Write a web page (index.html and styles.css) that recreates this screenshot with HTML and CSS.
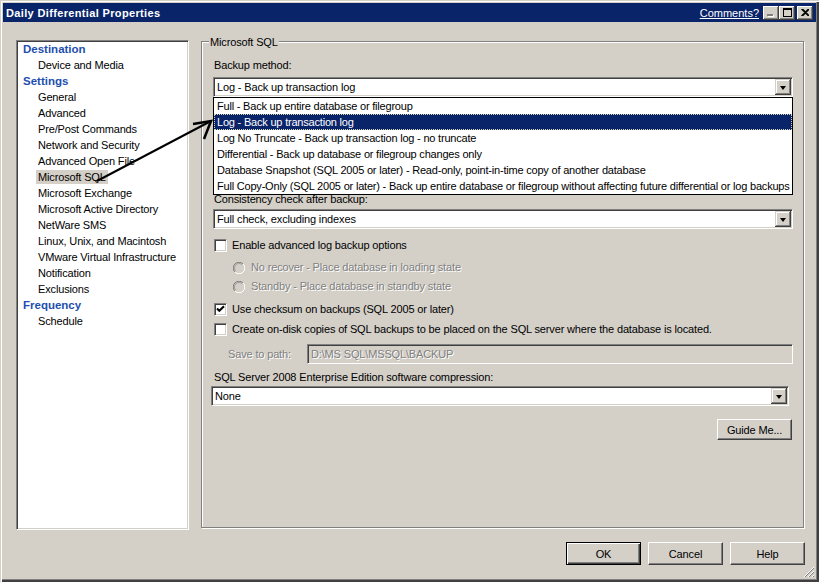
FILE: index.html
```html
<!DOCTYPE html>
<html>
<head>
<meta charset="utf-8">
<title>Daily Differential Properties</title>
<link rel="stylesheet" href="styles.css">
</head>
<body>
<div class="window">
  <div class="titlebar">
    <span class="title">Daily Differential Properties</span>
    <span class="comments">Comments?</span>
    <span class="capbtn disabled"><svg width="8" height="8" viewBox="0 0 8 8"><rect x="1" y="6" width="6" height="2" fill="#fff"/><rect x="0" y="5" width="6" height="2" fill="#808080"/></svg></span>
    <span class="capbtn"><svg width="9" height="9" viewBox="0 0 9 9"><rect x="0.5" y="1" width="8" height="7.5" fill="none" stroke="#000" stroke-width="1"/><rect x="0" y="0" width="9" height="2" fill="#000"/></svg></span>
    <span class="capbtn close"><svg width="8" height="7" viewBox="0 0 8 7"><path d="M0.5 0 L7.5 7 M1.5 0 L8.5 7 M7.5 0 L0.5 7 M8.5 0 L1.5 7" stroke="#000" stroke-width="1.2" fill="none"/></svg></span>
  </div>

  <div class="main">
    <div class="nav">
      <div class="nav-head">Destination</div>
      <div class="nav-item"><span>Device and Media</span></div>
      <div class="nav-head">Settings</div>
      <div class="nav-item"><span>General</span></div>
      <div class="nav-item"><span>Advanced</span></div>
      <div class="nav-item"><span>Pre/Post Commands</span></div>
      <div class="nav-item"><span>Network and Security</span></div>
      <div class="nav-item"><span>Advanced Open File</span></div>
      <div class="nav-item selected"><span>Microsoft SQL</span></div>
      <div class="nav-item"><span>Microsoft Exchange</span></div>
      <div class="nav-item"><span>Microsoft Active Directory</span></div>
      <div class="nav-item"><span>NetWare SMS</span></div>
      <div class="nav-item"><span>Linux, Unix, and Macintosh</span></div>
      <div class="nav-item"><span>VMware Virtual Infrastructure</span></div>
      <div class="nav-item"><span>Notification</span></div>
      <div class="nav-item"><span>Exclusions</span></div>
      <div class="nav-head">Frequency</div>
      <div class="nav-item"><span>Schedule</span></div>
    </div>

    <div class="group">
      <div class="legend">Microsoft SQL</div>

      <div class="label l-backup">Backup method:</div>
      <div class="combo c-backup">
        <span class="combo-text">Log - Back up transaction log</span>
        <span class="dd-btn"><i class="tri"></i></span>
        <div class="listbox">
          <div class="opt">Full - Back up entire database or filegroup</div>
          <div class="opt sel">Log - Back up transaction log</div>
          <div class="opt">Log No Truncate - Back up transaction log - no truncate</div>
          <div class="opt">Differential - Back up database or filegroup changes only</div>
          <div class="opt">Database Snapshot (SQL 2005 or later) - Read-only, point-in-time copy of another database</div>
          <div class="opt">Full Copy-Only (SQL 2005 or later) - Back up entire database or filegroup without affecting future differential or log backups</div>
        </div>
      </div>

      <div class="label l-consist">Consistency check after backup:</div>
      <div class="combo c-consist">
        <span class="combo-text">Full check, excluding indexes</span>
        <span class="dd-btn"><i class="tri"></i></span>
      </div>

      <div class="check r-adv"><span class="box"></span><span>Enable advanced log backup options</span></div>
      <div class="radio r-norec"><svg class="rad" width="12" height="12" viewBox="0 0 12 12"><circle cx="6" cy="6" r="5.5" fill="#d4d0c8"/><path d="M1.9 10.1 A5.5 5.5 0 0 1 10.1 1.9" stroke="#808080" fill="none"/><path d="M10.1 1.9 A5.5 5.5 0 0 1 1.9 10.1" stroke="#fff" fill="none"/><path d="M2.8 9.2 A4.5 4.5 0 0 1 9.2 2.8" stroke="#404040" fill="none" opacity="0.35"/></svg><span class="dis">No recover - Place database in loading state</span></div>
      <div class="radio r-stand"><svg class="rad" width="12" height="12" viewBox="0 0 12 12"><circle cx="6" cy="6" r="5.5" fill="#d4d0c8"/><path d="M1.9 10.1 A5.5 5.5 0 0 1 10.1 1.9" stroke="#808080" fill="none"/><path d="M10.1 1.9 A5.5 5.5 0 0 1 1.9 10.1" stroke="#fff" fill="none"/><path d="M2.8 9.2 A4.5 4.5 0 0 1 9.2 2.8" stroke="#404040" fill="none" opacity="0.35"/></svg><span class="dis">Standby - Place database in standby state</span></div>
      <div class="check r-sum"><span class="box"><svg width="9" height="9" viewBox="0 0 9 9"><path d="M1 3.5 L3.3 5.8 L8 1.2" stroke="#000" stroke-width="2" fill="none"/></svg></span><span>Use checksum on backups (SQL 2005 or later)</span></div>
      <div class="check r-disk"><span class="box"></span><span>Create on-disk copies of SQL backups to be placed on the SQL server where the database is located.</span></div>

      <div class="saverow">
        <span class="savelabel dis">Save to path:</span>
        <span class="field dis">D:\MS SQL\MSSQL\BACKUP</span>
      </div>

      <div class="label l-comp">SQL Server 2008 Enterprise Edition software compression:</div>
      <div class="combo c-comp">
        <span class="combo-text">None</span>
        <span class="dd-btn"><i class="tri"></i></span>
      </div>

      <div class="guide-row"><span class="btn guide">Guide Me...</span></div>
    </div>
  </div>

  <div class="footer">
    <span class="btn default">OK</span>
    <span class="btn">Cancel</span>
    <span class="btn">Help</span>
  </div>

  <svg class="grip" width="12" height="12" viewBox="0 0 12 12">
    <path d="M11 1 L1 11 M11 5 L5 11 M11 9 L9 11" stroke="#fff" stroke-width="1"/>
    <path d="M11 2 L2 11 M11 6 L6 11 M11 10 L10 11" stroke="#808080" stroke-width="1"/>
  </svg>

  <svg class="arrow" width="819" height="582" viewBox="0 0 819 582">
    <path d="M97 181 L211 121" stroke="#000" stroke-width="2" fill="none"/>
    <path d="M193 124 L211 121 L204 139" stroke="#000" stroke-width="2.5" fill="none" stroke-linejoin="miter"/>
  </svg>
</div>
</body>
</html>
```

FILE: styles.css
```css
* { box-sizing: border-box; }
html, body { margin: 0; padding: 0; }
body {
  width: 819px;
  height: 582px;
  overflow: hidden;
  background: #d4d0c8;
  font-family: "Liberation Sans", Arial, sans-serif;
  font-size: 11px;
  letter-spacing: -0.15px;
  color: #000;
}

.window {
  position: relative;
  width: 819px;
  height: 582px;
  padding: 3px;
  background: #d4d0c8;
  box-shadow: inset 1px 1px 0 #d4d0c8, inset 2px 2px 0 #fff, inset -1px -1px 0 #404040, inset -2px -2px 0 #404040, inset -3px -3px 0 #808080;
}

/* Title bar */
.titlebar {
  display: flex;
  align-items: center;
  height: 19px;
  padding: 0 3px 0 3px;
  background: #0a246a;
  color: #fff;
}
.title { flex: 1; font-weight: bold; font-size: 11px; letter-spacing: 0.35px; }
.comments { text-decoration: underline; margin-right: 4px; letter-spacing: 0; }
.capbtn {
  display: flex;
  align-items: center;
  justify-content: center;
  width: 16px;
  height: 14px;
  background: #d4d0c8;
  box-shadow: inset -1px -1px 0 #404040, inset 1px 1px 0 #fff, inset -2px -2px 0 #808080;
}
.capbtn.close { margin-left: 2px; }

/* Main area */
.main {
  display: flex;
  align-items: flex-start;
  padding: 18px 0 0 13px;
}
.nav {
  width: 173px;
  height: 490px;
  background: #fff;
  border: 1px solid;
  border-color: #808080 #fff #fff #808080;
  box-shadow: inset 1px 1px 0 #404040, inset -1px -1px 0 #d4d0c8;
  padding: 0 0 0 6px;
}
.nav-head {
  height: 16px;
  line-height: 16px;
  font-weight: bold;
  font-size: 11.5px;
  letter-spacing: 0;
  color: #1d4fb0;
}
.nav-item {
  height: 16px;
  line-height: 16px;
  padding-left: 13px;
}
.nav-item span { padding: 1px 2px; }
.nav-item.selected span { background: #d4d0c8; }

.group {
  margin: 1px 0 0 12px;
  width: 603px;
  height: 487px;
  border: 1px solid #808080;
  box-shadow: inset 1px 1px 0 #fff, 1px 1px 0 #fff;
  padding: 0 10px 0 11px;
  display: flex;
  flex-direction: column;
}
.legend {
  align-self: flex-start;
  margin: -6px 0 0 -4px;
  padding: 0 1px;
  height: 13px;
  line-height: 13px;
  background: #d4d0c8;
}
.label { height: 13px; line-height: 13px; padding-left: 1px; }
.l-backup { margin-top: 10px; }
.l-consist { margin-top: 96px; }
.l-comp { margin-top: 7px; }

.combo {
  position: relative;
  display: flex;
  align-items: center;
  height: 20px;
  background: #fff;
  border: 1px solid;
  border-color: #808080 #fff #fff #808080;
  box-shadow: inset 1px 1px 0 #404040, inset -1px -1px 0 #d4d0c8;
  padding: 0 1px 0 3px;
}
.c-backup { margin-top: 5px; }
.c-consist { margin-top: 3px; }
.c-comp { margin-top: 2px; margin-left: -2px; width: 578px; }
.combo-text { flex: 1; white-space: nowrap; }
.dd-btn {
  display: flex;
  align-items: center;
  justify-content: center;
  width: 16px;
  height: 16px;
  background: #d4d0c8;
  box-shadow: inset -1px -1px 0 #404040, inset 1px 1px 0 #d4d0c8, inset -2px -2px 0 #808080, inset 2px 2px 0 #fff;
}
.tri {
  width: 0;
  height: 0;
  border-left: 3.5px solid transparent;
  border-right: 3.5px solid transparent;
  border-top: 4px solid #000;
  margin-top: 1px;
}
.listbox {
  position: absolute;
  z-index: 5;
  left: -1px;
  right: -1px;
  top: 19px;
  background: #fff;
  border: 1px solid #000;
}
.opt {
  height: 16px;
  line-height: 16px;
  padding-left: 3px;
  white-space: nowrap;
  letter-spacing: -0.2px;
}
.opt.sel {
  background: #0a246a;
  color: #fff;
  outline: 1px dotted #d8d8b0;
  outline-offset: -1px;
}

.check, .radio {
  display: flex;
  align-items: center;
  height: 13px;
  line-height: 13px;
  white-space: nowrap;
}
.box {
  display: flex;
  align-items: center;
  justify-content: center;
  width: 13px;
  height: 13px;
  margin: 0 5px 0 1px;
  background: #fff;
  border: 1px solid;
  border-color: #808080 #fff #fff #808080;
  box-shadow: inset 1px 1px 0 #404040, inset -1px -1px 0 #d4d0c8;
}
.radio { padding-left: 20px; }
.rad { margin-right: 6px; flex: none; }
.dis { color: #808080; text-shadow: 1px 1px 0 #fff; }

.r-adv { margin-top: 10px; }
.r-norec { margin-top: 9px; }
.r-stand { margin-top: 6px; }
.r-sum { margin-top: 10px; }
.r-disk { margin-top: 7px; }

.saverow {
  display: flex;
  align-items: center;
  margin-top: 8px;
  height: 20px;
}
.savelabel { width: 94px; padding-left: 15px; }
.field {
  flex: 1;
  height: 20px;
  line-height: 18px;
  padding-left: 3px;
  background: #d4d0c8;
  border: 1px solid;
  border-color: #808080 #fff #fff #808080;
  box-shadow: inset 1px 1px 0 #404040, inset -1px -1px 0 #d4d0c8;
}

.guide-row {
  display: flex;
  justify-content: flex-end;
  margin-top: 13px;
  padding-right: 1px;
}

.btn {
  display: flex;
  align-items: center;
  justify-content: center;
  width: 75px;
  height: 23px;
  background: #d4d0c8;
  border: 1px solid;
  border-color: #fff #404040 #404040 #fff;
  box-shadow: inset -1px -1px 0 #808080;
}
.btn.guide { height: 21px; width: 75px; }
.btn.default {
  border: 1px solid #000;
  box-shadow: inset 1px 1px 0 #fff, inset -1px -1px 0 #404040, inset -2px -2px 0 #808080;
}

.footer {
  display: flex;
  justify-content: flex-end;
  gap: 7px;
  margin-top: 12px;
  padding-right: 11px;
}

.grip {
  position: absolute;
  right: 4px;
  bottom: 4px;
}
.arrow {
  position: absolute;
  left: 0;
  top: 0;
  z-index: 10;
  pointer-events: none;
}
```
